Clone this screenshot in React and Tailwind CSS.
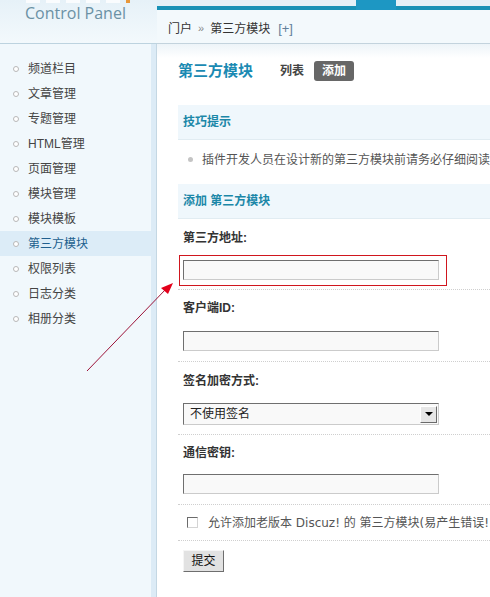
const items = ['频道栏目', '文章管理', '专题管理', 'HTML管理', '页面管理', '模块管理', '模块模板', '第三方模块', '权限列表', '日志分类', '相册分类'];

function Input() {
  return <div className="w-[256px] h-[20px] bg-[#f9f9f9] border border-[#cbcbcb] border-t-[#6f6f6f] border-l-[#6f6f6f]" />;
}

function Label({ children }) {
  return <div className="h-[16px] leading-[16px] pl-[5px] font-bold text-[12px] text-[#333]">{children}</div>;
}

export default function App() {
  return (
    <div className="relative w-[490px] h-[597px] overflow-hidden flex bg-white text-[12px] text-[#333] font-[family-name:'Liberation_Sans','Noto_Sans_CJK_SC',sans-serif]">
      {/* Left column */}
      <div className="w-[157px] shrink-0 flex flex-col">
        <div className="h-[44px] shrink-0 bg-gradient-to-b from-[#e6f1f8] to-[#f3f9fc] border-b border-[#bdd3df] flex flex-col">
          <div className="h-[3px] flex pl-[26px] gap-[6px]">
            <div className="w-[14px] bg-white/80" />
            <div className="w-[14px] bg-white/80" />
            <div className="w-[14px] bg-white/80" />
            <div className="w-[14px] bg-white/80" />
            <div className="w-[14px] bg-white/80" />
            <div className="w-[4px] bg-[#e8973a]" />
          </div>
          <div className="pl-[25px] pt-[1px] text-[16px] leading-[18px] text-[#6b91a5] font-[family-name:'Open_Sans',sans-serif]">Control Panel</div>
        </div>
        <div className="flex-1 flex">
          <div className="w-[151px] bg-[#f1f8fc] pt-[12px] flex flex-col">
            {items.map((t, i) => (
              <div key={t} className={`h-[25px] flex items-center pl-[13px] ${i === 7 ? 'bg-[#dcecf7] text-[#215f8e]' : 'text-[#444]'}`}>
                <span className="w-[6px] h-[6px] rounded-full border border-[#b8b8b8] bg-white mr-[9px]" />
                <span className="text-[12px] leading-[14px]">{t}</span>
              </div>
            ))}
          </div>
          <div className="w-[6px] bg-[#dcebf6] border-r border-[#c4d7e3]" />
        </div>
      </div>

      {/* Right column */}
      <div className="flex-1 flex flex-col min-w-0">
        <div className="h-[10px] flex shrink-0">
          <div className="w-[199px] flex flex-col">
            <div className="h-[6px] bg-[#e4f0f7]" />
            <div className="flex-1 bg-[#1891b6]" />
          </div>
          <div className="w-[40px] bg-[#1d97c3]" />
          <div className="flex-1 flex flex-col">
            <div className="h-[6px] bg-[#e4f0f7]" />
            <div className="flex-1 bg-[#1891b6]" />
          </div>
        </div>
        <div className="h-[34px] shrink-0 bg-[#f3f9fc] border-b border-[#c3d3dd] flex items-center pl-[11px] pt-[4px] whitespace-nowrap">
          <span className="text-[#333]">门户</span>
          <span className="text-[#888] mx-[6px] text-[11px]">»</span>
          <span className="text-[#333]">第三方模块</span>
          <span className="text-[#62809a] ml-[8px] text-[13px]">[+]</span>
        </div>

        <div className="flex-1 pl-[21px] bg-[linear-gradient(#edf4f8,#ffffff_14px)] whitespace-nowrap">
          {/* Title row */}
          <div className="h-[20px] mt-[17px] flex items-center">
            <span className="text-[15px] font-bold text-[#1a8ab3]">第三方模块</span>
            <span className="ml-[27px] font-bold text-[#444]">列表</span>
            <span className="ml-[10px] h-[20px] px-[8px] rounded-[3px] bg-[#676767] text-white font-bold flex items-center">添加</span>
          </div>

          {/* Tips */}
          <div className="mt-[24px] h-[35px] bg-[#eff7fc] border-b border-[#e1ecf2] flex items-center pl-[5px] font-bold text-[#1b87a8]">技巧提示</div>
          <div className="h-[44px] pt-[12px] flex items-start pl-[10px] text-[#555]">
            <span className="w-[5px] h-[5px] rounded-full bg-[#c4c4c4] mt-[5px] mr-[9px]" />
            <span className="leading-[16px]">插件开发人员在设计新的第三方模块前请务必仔细阅读</span>
          </div>

          {/* Form header */}
          <div className="h-[35px] bg-[#eff7fc] border-b border-[#e1ecf2] flex items-center pl-[5px] font-bold text-[#1b87a8]">添加 第三方模块</div>

          <div className="pt-[11px] pb-[3px] border-b border-dotted border-[#cfcfcf]">
            <Label>第三方地址:</Label>
            <div className="mt-[9px] ml-[1px] w-[268px] border border-[#d0161e] pt-[4px] pb-[5px] pl-[3px]">
              <Input />
            </div>
          </div>

          <div className="pt-[10px] pb-[10px] pl-[5px] border-b border-dotted border-[#cfcfcf]">
            <div className="-ml-[5px]"><Label>客户端ID:</Label></div>
            <div className="mt-[15px]"><Input /></div>
          </div>

          <div className="pt-[11px] pb-[9px] pl-[5px] border-b border-dotted border-[#cfcfcf]">
            <div className="-ml-[5px]"><Label>签名加密方式:</Label></div>
            <div className="mt-[14px] w-[256px] h-[22px] bg-[#f9f9f9] border border-[#cbcbcb] border-t-[#6f6f6f] border-l-[#6f6f6f] flex items-center justify-between pl-[6px] pr-[1px]">
              <span className="text-[#222]">不使用签名</span>
              <span className="w-[17px] h-[17px] bg-[#e6e6e6] border border-[#fff] border-r-[#6a6a6a] border-b-[#6a6a6a] flex items-center justify-center">
                <span className="w-0 h-0 border-l-[4px] border-r-[4px] border-t-[4px] border-l-transparent border-r-transparent border-t-black" />
              </span>
            </div>
          </div>

          <div className="pt-[10px] pb-[10px] pl-[5px] border-b border-dotted border-[#cfcfcf]">
            <div className="-ml-[5px]"><Label>通信密钥:</Label></div>
            <div className="mt-[13px]"><Input /></div>
          </div>

          <div className="h-[36px] flex items-center pl-[9px] border-b border-dotted border-[#cfcfcf]">
            <span className="w-[11px] h-[11px] bg-white border border-[#d4d4d4] border-t-[#6b6b6b] border-l-[#6b6b6b] mr-[10px]" />
            <span className="text-[#555] text-[12px] font-[family-name:'DejaVu_Sans','Noto_Sans_CJK_SC',sans-serif]">允许添加老版本 Discuz! 的 第三方模块(易产生错误!</span>
          </div>

          <div className="pt-[9px] pl-[5px]">
            <div className="w-[41px] h-[22px] bg-[#e2e2e2] border border-[#f5f5f5] border-r-[#6e6e6e] border-b-[#6e6e6e] flex items-center justify-center text-[#111] text-[12px]">提交</div>
          </div>
        </div>
      </div>

      {/* Red annotation arrow */}
      <svg className="absolute left-0 top-0 pointer-events-none" width="490" height="597" viewBox="0 0 490 597">
        <line x1="87" y1="371" x2="166" y2="289" stroke="#9c1238" strokeWidth="1" />
        <polygon points="173,283 161,288 168,294" fill="#e3001b" />
      </svg>
    </div>
  );
}
